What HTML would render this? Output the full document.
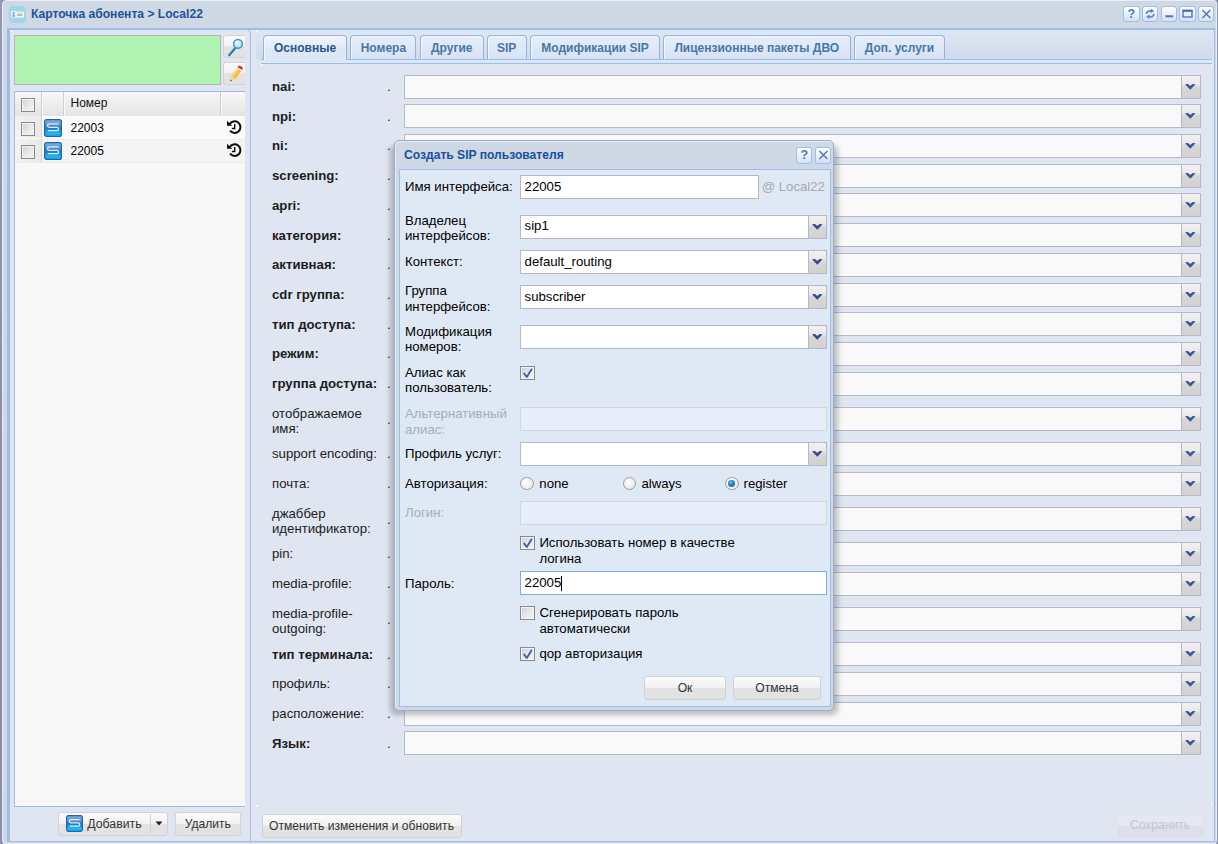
<!DOCTYPE html>
<html lang="ru">
<head>
<meta charset="utf-8">
<title>Карточка абонента</title>
<style>
*{box-sizing:border-box;margin:0;padding:0}
html,body{width:1218px;height:844px;overflow:hidden}
body{background:#8a90ae;font-family:"Liberation Sans",Arial,sans-serif;font-size:12px;color:#000;position:relative}
.abs{position:absolute}
#desk{left:0;top:0;width:3px;height:844px;background:linear-gradient(#8e9bb8 0,#8a93b0 30%,#8f8ea8 55%,#8a86a8 80%,#8c8fb0 100%)}
#win{left:2px;top:0;width:1215px;height:846px;background:linear-gradient(#cfd9e6 0,#cfd9e6 841.5px,#e2e7f0 842px,#e4e9f2 100%);border:1px solid #e9edf4;border-radius:4px 3px 6px 6px;box-shadow:1px 1px 0 0 #8f9ab3,2px 2px 3px #7f88a3}
#wtitle{left:31px;top:6px;font-size:12.1px;font-weight:bold;color:#1f5396;white-space:nowrap;line-height:16px}
.tool{position:absolute;top:6px;width:16.4px;height:16px;border:1px solid #9fbde6;border-radius:3px;background:linear-gradient(#ffffff 0,#eef4fc 40%,#d2e1f6 100%)}
#wbody{left:7px;top:28px;width:1208px;height:814px;background:#9fbde4}
#lp{left:10px;top:29px;width:241px;height:812px;background:#dfe5f1;border-right:1px solid #9fbde4;border-top:1px solid #9fbde4;border-top-right-radius:5px}
#rp{left:10px;top:30px;width:1204px;height:811px;background:#dfe5f1}
#green{left:14px;top:35px;width:207px;height:50px;background:#b1f4b1;border:1px solid #b4b4c9}
.btn{position:absolute;border:1px solid #d2d2d2;border-radius:3px;background:linear-gradient(#fbfbfb 0,#f1f1f1 49%,#e3e3e3 50%,#e1e1e1 100%);color:#333;font-size:12.1px;text-align:center;white-space:nowrap}
#grid{left:14px;top:91px;width:231px;height:716px;border:1px solid #9dbce6;border-right:0;background:#f8f8f8;overflow:hidden}
#ghd{left:0;top:0;width:230px;height:24px;background:linear-gradient(#f8f8f8,#efefef 40%,#e4e4e6)}
.csep{position:absolute;top:0;width:2px;height:24px;border-left:1px solid #cfcfcf;border-right:1px solid #fafafa}
.row{position:absolute;left:0;width:230px;height:23px;border-bottom:1px solid #ededed;font-size:12px}
.cb{position:absolute;width:14px;height:14px;border:1px solid #8a8a8a;background:linear-gradient(135deg,#c9cdd6 0,#e4e6ea 45%,#f4f4f4 100%);box-shadow:inset 0 0 0 1px #f2f2f2}
.spec{position:absolute;left:0;top:0;width:27px;height:22px;background:linear-gradient(90deg,#f3f3f3,#e9e9e9);border-right:1px solid #d6d6d6}
/* tabs */
#tabbar{left:256px;top:30px;width:957px;height:29px;background:linear-gradient(#dfe7f3,#cfdcee)}
#tabstrip{left:261px;top:58.6px;width:951px;height:5px;background:#dce8f7;border-top:1px solid #9dbce6}
#tabbody{left:261px;top:63.4px;width:951px;height:750px;border-top:1px solid #9dbce6;background:#dfe5f1}
.tab{position:absolute;top:35px;height:24px;border:1px solid #93b4e0;border-bottom:0;border-radius:4px 4px 0 0;background:linear-gradient(#e6eefa,#d6e3f4);color:#4b75a9;font-weight:bold;font-size:12px;text-align:center;line-height:25px;white-space:nowrap;box-shadow:inset 1px 1px 0 #f2f6fc}
.tab.act{height:25px;background:linear-gradient(#f3f6fb,#dde8f6 60%,#dce8f7);color:#2c5490}
/* form */
.fl{position:absolute;left:272px;font-size:13.2px;color:#1c1c1c;line-height:15.4px;white-space:nowrap}
.fl.b{font-weight:bold}
.dot{position:absolute;left:387px;font-size:13.2px;color:#1c1c1c;line-height:15.4px}
.fld{position:absolute;left:404px;width:797px;height:24px;border:1px solid #b5b8c8;background:#f9f9f9}
.trg{position:absolute;right:0;top:0;width:19px;height:22px;border-left:1px solid #b5b8c8;background:linear-gradient(#f2f2f2 0,#e9e9e9 38%,#d6d6d6 50%,#d2d2d2 100%)}
.trg svg{position:absolute;left:3px;top:8px}
/* dialog */
#dshadow{left:390px;top:145px;width:447.5px;height:569.5px;border-radius:6px;background:rgba(70,72,85,.33);filter:blur(2.4px)}
#dlg{left:394px;top:140.4px;width:439.5px;height:570.6px;background:#cfd9e6;border:1px solid #9eaeca;border-radius:5px;box-shadow:inset 1px 1px 0 #e6ebf3}
#dtitle{left:404px;top:146.5px;font-size:12.1px;font-weight:bold;color:#15509f;line-height:16px;white-space:nowrap}
#dbody{left:399px;top:169.3px;width:432px;height:538px;background:#dfe8f5;border:1px solid #9dbce6}
.dl{position:absolute;left:405px;font-size:13.2px;line-height:15.4px;color:#000;white-space:nowrap}
.dl.dis{color:#a5adb9}
.di{position:absolute;left:520px;height:24px;border:1px solid #b5b8c8;background:#fff;font-size:13.2px;line-height:21px;padding-left:4px;white-space:nowrap;color:#000}
.di.dis{background:#e8eef9;border-color:#d0d6e3}
.di .trg{width:18px}
.txt{position:absolute;font-size:13.2px;line-height:15.4px;white-space:nowrap;color:#000}
.rad{position:absolute;width:13.5px;height:13.5px;border-radius:50%;border:1px solid #9c9c9c;background:radial-gradient(circle at 40% 40%,#ffffff 0,#ededed 60%,#dcdcdc 100%)}
.rad.on::after{content:"";position:absolute;left:2.3px;top:2.3px;width:7px;height:7px;border-radius:50%;background:radial-gradient(circle at 40% 35%,#5fc4ea 0,#1f7fc0 45%,#16619a 100%)}
</style>
</head>
<body>
<div id="desk" class="abs"></div>
<div id="win" class="abs"></div>
<!-- window header -->
<svg class="abs" style="left:9px;top:6px" width="17" height="17" viewBox="0 0 17 17"><rect x="0" y="0" width="17" height="17" rx="4" fill="#9ed8e8"/><rect x="2" y="5" width="13" height="6.5" fill="#f4f7f8"/><rect x="7.3" y="5.2" width="7.4" height="1.1" fill="#bfe39a"/><rect x="8" y="7.6" width="5.5" height="2.4" fill="#b9bcc0"/><circle cx="4.6" cy="6.9" r="1.05" fill="#6c9fe6"/><path d="M3 10.8 C3 8.8 3.9 8 4.6 8 C5.3 8 6.2 8.8 6.2 10.8 Z" fill="#7eabec"/></svg>
<div id="wtitle" class="abs">Карточка абонента &gt; Local22</div>
<div id="wbody" class="abs"></div>
<div id="rp" class="abs"></div>
<div id="lp" class="abs"></div>

<!-- window tools -->
<div class="tool" style="left:1123.3px"><svg width="15" height="14" viewBox="0 0 15 14" style="position:absolute;left:0;top:0"><text x="7.3" y="11.3" text-anchor="middle" font-family="Liberation Sans, sans-serif" font-weight="bold" font-size="12.5" fill="#4d7ab2">?</text></svg></div>
<div class="tool" style="left:1142px"><svg width="15" height="14" viewBox="0 0 15 14" style="position:absolute;left:0;top:0"><path d="M3.5 7 C3.5 4.7 5.4 3.8 8 3.9" fill="none" stroke="#5b88be" stroke-width="1.7"/><path d="M7.7 1.8 L11.4 4 L7.7 6.3 Z" fill="#5b88be"/><path d="M10.9 6.8 C10.9 9.1 9 10 6.4 9.9" fill="none" stroke="#5b88be" stroke-width="1.7"/><path d="M6.7 7.5 L3 9.8 L6.7 12 Z" fill="#5b88be"/></svg></div>
<div class="tool" style="left:1160.7px"><svg width="15" height="14" viewBox="0 0 15 14" style="position:absolute;left:0;top:0"><rect x="3.4" y="8.3" width="7.8" height="2" fill="#5a6fb5"/></svg></div>
<div class="tool" style="left:1179.3px"><svg width="15" height="14" viewBox="0 0 15 14" style="position:absolute;left:0;top:0"><rect x="3" y="3.4" width="9" height="6.6" fill="#e6f0fb" stroke="#4f68b4" stroke-width="1.3"/><rect x="2.4" y="2.8" width="10.2" height="2" fill="#4f68b4"/></svg></div>
<div class="tool" style="left:1198px"><svg width="15" height="14" viewBox="0 0 15 14" style="position:absolute;left:0;top:0"><path d="M3.4 3 L11.4 11 M11.4 3 L3.4 11" stroke="#5a73b8" stroke-width="1.5" fill="none"/></svg></div>

<!-- left panel -->
<div id="green" class="abs"></div>
<div class="abs" style="left:223px;top:35px;width:22px;height:51px;overflow:hidden">
  <div class="btn" style="left:0.4px;top:0.3px;width:30px;height:23.2px"></div>
  <div class="btn" style="left:0.4px;top:26.5px;width:30px;height:23.2px"></div>
  <svg class="abs" style="left:4px;top:3px" width="18" height="20" viewBox="0 0 18 20"><defs><radialGradient id="gl" cx="40%" cy="35%" r="70%"><stop offset="0" stop-color="#f2fbfd"/><stop offset="1" stop-color="#a8dbe9"/></radialGradient></defs><path d="M8 10.2 L2 17.3" stroke="#2f86c4" stroke-width="2.1" stroke-linecap="round"/><path d="M8.3 10.6 L2.6 17.6" stroke="#1d5f96" stroke-width="0.8" stroke-linecap="round"/><circle cx="11" cy="5.8" r="4.4" fill="url(#gl)" stroke="#3d96cc" stroke-width="1.5"/></svg>
  <svg class="abs" style="left:4px;top:30px" width="18" height="19" viewBox="0 0 18 19"><path d="M10 3.2 L14.6 5.6 L8.2 14 L3.6 11.6 Z" fill="#f0bf3a"/><path d="M10 3.2 L12.2 4.4 L5.8 12.8 L3.6 11.6 Z" fill="#f7d873"/><path d="M10.6 2.2 L15.2 4.7 L14.4 6 L9.8 3.5 Z" fill="#e9e1cf"/><path d="M11.2 0.8 C12.5 0.2 15.8 2 16 3.2 L15.2 4.7 L10.6 2.2 Z" fill="#e0262d"/><path d="M3.6 11.6 L8.2 14 L3.2 16.6 Z" fill="#efd7ae"/><path d="M3.35 14.6 L5 15.5 L3.1 16.6 Z" fill="#3d4c5c"/></svg>
</div>

<div id="grid" class="abs">
  <div id="ghd" class="abs">
    <div class="csep" style="left:26px"></div>
    <div class="csep" style="left:48px"></div>
    <div class="csep" style="left:205px"></div>
    <div class="cb" style="left:6px;top:6px"></div>
    <div class="abs" style="left:55.5px;top:3px;line-height:16px;font-size:12px;color:#111">Номер</div>
  </div>
  <div class="row" style="top:24px;height:24px;background:#fafafa">
    <div class="spec"></div><div class="cb" style="left:6px;top:6px"></div>
    <svg class="abs sico" style="left:29px;top:3px" width="18" height="18" viewBox="0 0 18 18"><use href="#sico"/></svg>
    <div class="abs" style="left:55.5px;top:3.5px;line-height:16px">22003</div>
    <svg class="abs" style="left:212px;top:4px" width="16" height="15" viewBox="0 0 16 15"><use href="#hist"/></svg>
  </div>
  <div class="row" style="top:48px;background:#f4f4f4">
    <div class="spec" style="top:-1px;height:23px"></div><div class="cb" style="left:6px;top:5px"></div>
    <svg class="abs sico" style="left:29px;top:2px" width="18" height="18" viewBox="0 0 18 18"><use href="#sico"/></svg>
    <div class="abs" style="left:55.5px;top:2.5px;line-height:16px">22005</div>
    <svg class="abs" style="left:212px;top:3px" width="16" height="15" viewBox="0 0 16 15"><use href="#hist"/></svg>
  </div>
</div>
<svg width="0" height="0" style="position:absolute"><defs>
  <linearGradient id="sg" x1="0" y1="0" x2="0" y2="1"><stop offset="0.05" stop-color="#7aabd6"/><stop offset="0.3" stop-color="#5f9bd0"/><stop offset="0.52" stop-color="#2279c2"/><stop offset="0.8" stop-color="#1fb4f0"/><stop offset="1" stop-color="#1eb0ee"/></linearGradient>
  <g id="sico"><rect x="0.6" y="0.6" width="16.8" height="16.8" rx="2" fill="url(#sg)" stroke="#1f66ab" stroke-width="1.2"/><path d="M14.4 4.8 H5.3 C3 4.8 3 8.3 5.3 8.3 H12.8 C15.1 8.3 15.1 11.7 12.8 11.7 H3.8" fill="none" stroke="#e9f3fb" stroke-width="1.3" stroke-opacity="0.92"/></g>
  <g id="hist"><path d="M2.6 4.2 A5.8 5.8 0 1 1 3.06 10.73" fill="none" stroke="#0d0d0d" stroke-width="2"/><path d="M0 0.8 L0 5.8 L5.3 5.8 Z" fill="#0d0d0d"/><path d="M7.7 3.9 V8.5 H4.9" fill="none" stroke="#0d0d0d" stroke-width="1.4"/></g>
</defs></svg>

<!-- left bottom toolbar -->
<div class="btn" style="left:57.5px;top:811.5px;width:110.5px;height:24px"></div>
<svg class="abs" style="left:66px;top:815px" width="17" height="17" viewBox="0 0 18 18"><use href="#sico"/></svg>
<div class="abs" style="left:87.3px;top:815.6px;line-height:16px;font-size:12.3px;color:#333">Добавить</div>
<div class="abs" style="left:150px;top:814px;width:1px;height:19px;background:#d0d0d0"></div>
<svg class="abs" style="left:155.3px;top:821px" width="8" height="5" viewBox="0 0 8 5"><path d="M0.5 0.5 H7.5 L4 4.5 Z" fill="#222"/></svg>
<div class="btn" style="left:174.5px;top:811.5px;width:66.5px;height:24px;line-height:22px">Удалить</div>

<!-- right panel: tabs -->
<div id="tabbar" class="abs"></div>
<div id="tabstrip" class="abs"></div>
<div id="tabbody" class="abs"></div>
<div class="tab act" style="left:263px;width:84.0px">Основные</div>
<div class="tab" style="left:350.4px;width:66.0px">Номера</div>
<div class="tab" style="left:420px;width:63.6px">Другие</div>
<div class="tab" style="left:486.6px;width:40.2px">SIP</div>
<div class="tab" style="left:530.4px;width:129.4px">Модификации SIP</div>
<div class="tab" style="left:663px;width:187.5px">Лицензионные пакеты ДВО</div>
<div class="tab" style="left:854px;width:91.0px">Доп. услуги</div>
<!-- form -->
<div class="fl b" style="top:79px">nai:</div>
<div class="dot" style="top:79px">.</div>
<div class="fld" style="top:75px"><div class="trg"><svg width="11" height="7" viewBox="0 0 11 7"><path d="M0 0.2 L3 0 L5.3 2.0 L7.6 0 L10.6 0.2 L5.3 5.7 Z" fill="#3a5795"/></svg></div></div>
<div class="fl b" style="top:109px">npi:</div>
<div class="dot" style="top:109px">.</div>
<div class="fld" style="top:104px"><div class="trg"><svg width="11" height="7" viewBox="0 0 11 7"><path d="M0 0.2 L3 0 L5.3 2.0 L7.6 0 L10.6 0.2 L5.3 5.7 Z" fill="#3a5795"/></svg></div></div>
<div class="fl b" style="top:138px">ni:</div>
<div class="dot" style="top:138px">.</div>
<div class="fld" style="top:134px"><div class="trg"><svg width="11" height="7" viewBox="0 0 11 7"><path d="M0 0.2 L3 0 L5.3 2.0 L7.6 0 L10.6 0.2 L5.3 5.7 Z" fill="#3a5795"/></svg></div></div>
<div class="fl b" style="top:168px">screening:</div>
<div class="dot" style="top:168px">.</div>
<div class="fld" style="top:164px"><div class="trg"><svg width="11" height="7" viewBox="0 0 11 7"><path d="M0 0.2 L3 0 L5.3 2.0 L7.6 0 L10.6 0.2 L5.3 5.7 Z" fill="#3a5795"/></svg></div></div>
<div class="fl b" style="top:198px">apri:</div>
<div class="dot" style="top:198px">.</div>
<div class="fld" style="top:193px"><div class="trg"><svg width="11" height="7" viewBox="0 0 11 7"><path d="M0 0.2 L3 0 L5.3 2.0 L7.6 0 L10.6 0.2 L5.3 5.7 Z" fill="#3a5795"/></svg></div></div>
<div class="fl b" style="top:228px">категория:</div>
<div class="dot" style="top:228px">.</div>
<div class="fld" style="top:223px"><div class="trg"><svg width="11" height="7" viewBox="0 0 11 7"><path d="M0 0.2 L3 0 L5.3 2.0 L7.6 0 L10.6 0.2 L5.3 5.7 Z" fill="#3a5795"/></svg></div></div>
<div class="fl b" style="top:257px">активная:</div>
<div class="dot" style="top:257px">.</div>
<div class="fld" style="top:253px"><div class="trg"><svg width="11" height="7" viewBox="0 0 11 7"><path d="M0 0.2 L3 0 L5.3 2.0 L7.6 0 L10.6 0.2 L5.3 5.7 Z" fill="#3a5795"/></svg></div></div>
<div class="fl b" style="top:287px">cdr группа:</div>
<div class="dot" style="top:287px">.</div>
<div class="fld" style="top:283px"><div class="trg"><svg width="11" height="7" viewBox="0 0 11 7"><path d="M0 0.2 L3 0 L5.3 2.0 L7.6 0 L10.6 0.2 L5.3 5.7 Z" fill="#3a5795"/></svg></div></div>
<div class="fl b" style="top:317px">тип доступа:</div>
<div class="dot" style="top:317px">.</div>
<div class="fld" style="top:312px"><div class="trg"><svg width="11" height="7" viewBox="0 0 11 7"><path d="M0 0.2 L3 0 L5.3 2.0 L7.6 0 L10.6 0.2 L5.3 5.7 Z" fill="#3a5795"/></svg></div></div>
<div class="fl b" style="top:346px">режим:</div>
<div class="dot" style="top:346px">.</div>
<div class="fld" style="top:342px"><div class="trg"><svg width="11" height="7" viewBox="0 0 11 7"><path d="M0 0.2 L3 0 L5.3 2.0 L7.6 0 L10.6 0.2 L5.3 5.7 Z" fill="#3a5795"/></svg></div></div>
<div class="fl b" style="top:376px">группа доступа:</div>
<div class="dot" style="top:376px">.</div>
<div class="fld" style="top:372px"><div class="trg"><svg width="11" height="7" viewBox="0 0 11 7"><path d="M0 0.2 L3 0 L5.3 2.0 L7.6 0 L10.6 0.2 L5.3 5.7 Z" fill="#3a5795"/></svg></div></div>
<div class="fl" style="top:406px">отображаемое<br>имя:</div>
<div class="dot" style="top:411.5px">.</div>
<div class="fld" style="top:407px"><div class="trg"><svg width="11" height="7" viewBox="0 0 11 7"><path d="M0 0.2 L3 0 L5.3 2.0 L7.6 0 L10.6 0.2 L5.3 5.7 Z" fill="#3a5795"/></svg></div></div>
<div class="fl" style="top:446px">support encoding:</div>
<div class="dot" style="top:446px">.</div>
<div class="fld" style="top:442px"><div class="trg"><svg width="11" height="7" viewBox="0 0 11 7"><path d="M0 0.2 L3 0 L5.3 2.0 L7.6 0 L10.6 0.2 L5.3 5.7 Z" fill="#3a5795"/></svg></div></div>
<div class="fl" style="top:476px">почта:</div>
<div class="dot" style="top:476px">.</div>
<div class="fld" style="top:472px"><div class="trg"><svg width="11" height="7" viewBox="0 0 11 7"><path d="M0 0.2 L3 0 L5.3 2.0 L7.6 0 L10.6 0.2 L5.3 5.7 Z" fill="#3a5795"/></svg></div></div>
<div class="fl" style="top:506px">джаббер<br>идентификатор:</div>
<div class="dot" style="top:511.5px">.</div>
<div class="fld" style="top:507px"><div class="trg"><svg width="11" height="7" viewBox="0 0 11 7"><path d="M0 0.2 L3 0 L5.3 2.0 L7.6 0 L10.6 0.2 L5.3 5.7 Z" fill="#3a5795"/></svg></div></div>
<div class="fl" style="top:546px">pin:</div>
<div class="dot" style="top:546px">.</div>
<div class="fld" style="top:542px"><div class="trg"><svg width="11" height="7" viewBox="0 0 11 7"><path d="M0 0.2 L3 0 L5.3 2.0 L7.6 0 L10.6 0.2 L5.3 5.7 Z" fill="#3a5795"/></svg></div></div>
<div class="fl" style="top:576px">media-profile:</div>
<div class="dot" style="top:576px">.</div>
<div class="fld" style="top:572px"><div class="trg"><svg width="11" height="7" viewBox="0 0 11 7"><path d="M0 0.2 L3 0 L5.3 2.0 L7.6 0 L10.6 0.2 L5.3 5.7 Z" fill="#3a5795"/></svg></div></div>
<div class="fl" style="top:606px">media-profile-<br>outgoing:</div>
<div class="dot" style="top:611.5px">.</div>
<div class="fld" style="top:607px"><div class="trg"><svg width="11" height="7" viewBox="0 0 11 7"><path d="M0 0.2 L3 0 L5.3 2.0 L7.6 0 L10.6 0.2 L5.3 5.7 Z" fill="#3a5795"/></svg></div></div>
<div class="fl b" style="top:647px">тип терминала:</div>
<div class="dot" style="top:647px">.</div>
<div class="fld" style="top:642px"><div class="trg"><svg width="11" height="7" viewBox="0 0 11 7"><path d="M0 0.2 L3 0 L5.3 2.0 L7.6 0 L10.6 0.2 L5.3 5.7 Z" fill="#3a5795"/></svg></div></div>
<div class="fl" style="top:676px">профиль:</div>
<div class="dot" style="top:676px">.</div>
<div class="fld" style="top:672px"><div class="trg"><svg width="11" height="7" viewBox="0 0 11 7"><path d="M0 0.2 L3 0 L5.3 2.0 L7.6 0 L10.6 0.2 L5.3 5.7 Z" fill="#3a5795"/></svg></div></div>
<div class="fl" style="top:706px">расположение:</div>
<div class="dot" style="top:706px">.</div>
<div class="fld" style="top:702px"><div class="trg"><svg width="11" height="7" viewBox="0 0 11 7"><path d="M0 0.2 L3 0 L5.3 2.0 L7.6 0 L10.6 0.2 L5.3 5.7 Z" fill="#3a5795"/></svg></div></div>
<div class="fl b" style="top:736px">Язык:</div>
<div class="dot" style="top:736px">.</div>
<div class="fld" style="top:731px"><div class="trg"><svg width="11" height="7" viewBox="0 0 11 7"><path d="M0 0.2 L3 0 L5.3 2.0 L7.6 0 L10.6 0.2 L5.3 5.7 Z" fill="#3a5795"/></svg></div></div>
<!-- bottom toolbar right -->
<div class="btn" style="left:261.5px;top:813.5px;width:200px;height:24px;line-height:22.6px">Отменить изменения и обновить</div>
<div class="btn" style="left:1116.5px;top:814.5px;width:87px;height:23px;line-height:19px;color:#c2c7d2;border-color:#dfe3ec;background:linear-gradient(#e5e9f1 0,#e3e7ef 49%,#dde0e9 50%,#dcdfe8 100%)">Сохранить</div>

<!-- tiny corner highlights -->
<div class="abs" style="left:10px;top:30px;width:2px;height:2px;background:#f4f7fb"></div>
<div class="abs" style="left:256px;top:30px;width:2px;height:2px;background:#f4f7fb"></div>
<div class="abs" style="left:261px;top:64.4px;width:1.5px;height:2px;background:#f4f7fb"></div>
<div class="abs" style="left:1210.5px;top:64.4px;width:1.5px;height:2px;background:#f4f7fb"></div>
<div class="abs" style="left:256px;top:805px;width:2px;height:2px;background:#f4f7fb"></div>
<div class="abs" style="left:1210.5px;top:803px;width:1.5px;height:2px;background:#f4f7fb"></div>
<!-- dialog -->
<div id="dshadow" class="abs"></div>
<div id="dlg" class="abs"></div>
<div id="dtitle" class="abs">Создать SIP пользователя</div>
<div class="tool" style="left:795.6px;top:147.2px;height:16.6px"><svg width="15" height="14" viewBox="0 0 15 14" style="position:absolute;left:0;top:0"><text x="7.3" y="11.3" text-anchor="middle" font-family="Liberation Sans, sans-serif" font-weight="bold" font-size="12.5" fill="#4d7ab2">?</text></svg></div>
<div class="tool" style="left:814.8px;top:147.2px;height:16.6px"><svg width="15" height="14" viewBox="0 0 15 14" style="position:absolute;left:0;top:0"><path d="M3.4 3 L11.4 11 M11.4 3 L3.4 11" stroke="#5a73b8" stroke-width="1.5" fill="none"/></svg></div>
<div id="dbody" class="abs"></div>
<div class="dl" style="top:178.8px">Имя интерфейса:</div>
<div class="di" style="top:175px;width:238.5px;height:24px"></div>
<div class="txt" style="left:524.6px;top:178.8px">22005</div>
<div class="txt" style="left:761.7px;top:178.8px;color:#a6a9b0">@ Local22</div>
<div class="dl" style="top:212.9px">Владелец<br>интерфейсов:</div>
<div class="di" style="top:215px;width:307px;height:24px"><div class=trg><svg width="11" height="7" viewBox="0 0 11 7"><path d="M0 0.2 L3 0 L5.3 2.0 L7.6 0 L10.6 0.2 L5.3 5.7 Z" fill="#2f4b8d"/></svg></div></div>
<div class="txt" style="left:524.6px;top:218px">sip1</div>
<div class="dl" style="top:253.7px">Контекст:</div>
<div class="di" style="top:250px;width:307px;height:24px"><div class=trg><svg width="11" height="7" viewBox="0 0 11 7"><path d="M0 0.2 L3 0 L5.3 2.0 L7.6 0 L10.6 0.2 L5.3 5.7 Z" fill="#2f4b8d"/></svg></div></div>
<div class="txt" style="left:524.6px;top:253.7px">default_routing</div>
<div class="dl" style="top:283.3px">Группа<br>интерфейсов:</div>
<div class="di" style="top:285px;width:307px;height:24px"><div class=trg><svg width="11" height="7" viewBox="0 0 11 7"><path d="M0 0.2 L3 0 L5.3 2.0 L7.6 0 L10.6 0.2 L5.3 5.7 Z" fill="#2f4b8d"/></svg></div></div>
<div class="txt" style="left:524.6px;top:288.8px">subscriber</div>
<div class="dl" style="top:323.7px">Модификация<br>номеров:</div>
<div class="di" style="top:325px;width:307px;height:24px"><div class=trg><svg width="11" height="7" viewBox="0 0 11 7"><path d="M0 0.2 L3 0 L5.3 2.0 L7.6 0 L10.6 0.2 L5.3 5.7 Z" fill="#2f4b8d"/></svg></div></div>
<div class="dl" style="top:364.8px">Алиас как<br>пользователь:</div>
<div class="cb" style="left:520px;top:366px;width:15px"><svg width="13" height="12" viewBox="0 0 13 12" style="position:absolute;left:0;top:0"><path d="M3.2 6.6 L5.8 10 L10.4 2.4" fill="none" stroke="#4560a6" stroke-width="1.9" stroke-linecap="round" stroke-linejoin="round"/></svg></div>
<div class="dl dis" style="top:406.1px">Альтернативный<br>алиас:</div>
<div class="di dis" style="top:407px;width:307px;height:24px"></div>
<div class="dl" style="top:445.8px">Профиль услуг:</div>
<div class="di" style="top:442px;width:307px;height:24px"><div class=trg><svg width="11" height="7" viewBox="0 0 11 7"><path d="M0 0.2 L3 0 L5.3 2.0 L7.6 0 L10.6 0.2 L5.3 5.7 Z" fill="#2f4b8d"/></svg></div></div>
<div class="dl" style="top:475.6px">Авторизация:</div>
<div class="rad" style="left:520px;top:476.8px"></div>
<div class="txt" style="left:539.3px;top:475.6px">none</div>
<div class="rad" style="left:622.9px;top:476.8px"></div>
<div class="txt" style="left:641.4px;top:475.6px">always</div>
<div class="rad on" style="left:725px;top:476.8px"></div>
<div class="txt" style="left:743.5px;top:475.6px">register</div>
<div class="dl dis" style="top:505.0px">Логин:</div>
<div class="di dis" style="top:501px;width:307px;height:24px"></div>
<div class="cb" style="left:520px;top:536px;width:15px"><svg width="13" height="12" viewBox="0 0 13 12" style="position:absolute;left:0;top:0"><path d="M3.2 6.6 L5.8 10 L10.4 2.4" fill="none" stroke="#4560a6" stroke-width="1.9" stroke-linecap="round" stroke-linejoin="round"/></svg></div>
<div class="txt" style="left:539.4px;top:535.2px">Использовать номер в качестве<br>логина</div>
<div class="dl" style="top:575.8px">Пароль:</div>
<div class="di" style="top:571px;width:307px;height:24px;border-color:#7eadd9"></div>
<div class="txt" style="left:524.6px;top:575.1px">22005</div>
<div class="abs" style="left:561px;top:576px;width:1px;height:15px;background:#000"></div>
<div class="cb" style="left:520px;top:606px;width:15px"></div>
<div class="txt" style="left:539.4px;top:605.2px">Сгенерировать пароль<br>автоматически</div>
<div class="cb" style="left:520px;top:647px;width:15px"><svg width="13" height="12" viewBox="0 0 13 12" style="position:absolute;left:0;top:0"><path d="M3.2 6.6 L5.8 10 L10.4 2.4" fill="none" stroke="#4560a6" stroke-width="1.9" stroke-linecap="round" stroke-linejoin="round"/></svg></div>
<div class="txt" style="left:539.4px;top:646.2px">qop авторизация</div>
<div class="btn" style="left:644px;top:676.3px;width:82px;height:23.5px;line-height:22px">Ок</div>
<div class="btn" style="left:733px;top:676.3px;width:88px;height:23.5px;line-height:22px">Отмена</div>
</body>
</html>
